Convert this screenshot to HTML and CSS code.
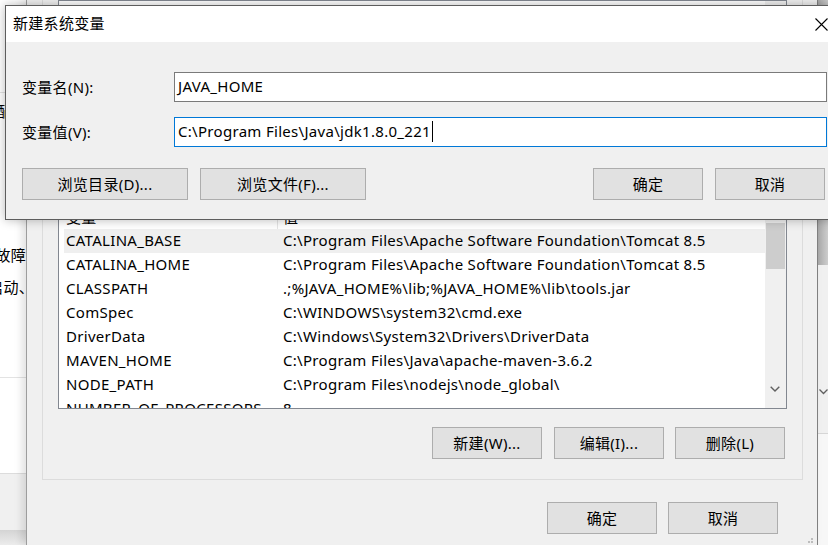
FILE: index.html
```html
<!DOCTYPE html>
<html lang="zh-CN">
<head>
<meta charset="utf-8">
<link rel="stylesheet" href="styles.css">
</head>
<body>
<div class="desk">
  <div class="bg-left">
    <div class="bl-line bl-l1"></div>
    <div class="bl-text bl-t1"><span>配置</span></div>
    <div class="bl-text bl-t2"><span>最</span></div>
    <div class="bl-text bl-t3"><span>排除故障</span></div>
    <div class="bl-text bl-t4"><span>系统启动、</span></div>
    <div class="bl-line bl-l2"></div>
    <div class="bl-foot"></div>
    <div class="bl-band"></div>
  </div>

  <div class="bg-right">
    <div class="br-thumb"></div>
    <div class="br-track">
      <svg class="br-chev" width="9" height="6" viewBox="0 0 9 6"><path d="M0.5 0.5 L4.5 4.5 L8.5 0.5" fill="none" stroke="#606060" stroke-width="1.3"/></svg>
    </div>
    <div class="br-low"></div>
  </div>

  <div class="envwin">
    <div class="grp">
      <div class="list">
        <div class="list-body">
          <div class="list-head"><span class="c1">变量</span><span class="c2">值</span></div>
          <div class="row sel"><span class="c1">CATALINA_BASE</span><span class="c2">C:\Program Files\Apache Software Foundation\Tomcat 8.5</span></div>
          <div class="row"><span class="c1">CATALINA_HOME</span><span class="c2">C:\Program Files\Apache Software Foundation\Tomcat 8.5</span></div>
          <div class="row"><span class="c1">CLASSPATH</span><span class="c2">.;%JAVA_HOME%\lib;%JAVA_HOME%\lib\tools.jar</span></div>
          <div class="row"><span class="c1">ComSpec</span><span class="c2">C:\WINDOWS\system32\cmd.exe</span></div>
          <div class="row"><span class="c1">DriverData</span><span class="c2">C:\Windows\System32\Drivers\DriverData</span></div>
          <div class="row"><span class="c1">MAVEN_HOME</span><span class="c2">C:\Program Files\Java\apache-maven-3.6.2</span></div>
          <div class="row"><span class="c1">NODE_PATH</span><span class="c2">C:\Program Files\nodejs\node_global\</span></div>
          <div class="row"><span class="c1">NUMBER_OF_PROCESSORS</span><span class="c2">8</span></div>
        </div>
        <div class="vscroll">
          <div class="thumb"></div>
          <svg class="chev" width="10" height="6" viewBox="0 0 10 6"><path d="M0.7 0.7 L5 5 L9.3 0.7" fill="none" stroke="#606060" stroke-width="1.4"/></svg>
        </div>
      </div>
      <div class="btnrow">
        <div class="btn w110 first">新建(W)...</div>
        <div class="btn w110">编辑(I)...</div>
        <div class="btn w110">删除(L)</div>
      </div>
    </div>
    <div class="okrow">
      <div class="btn w110">确定</div>
      <div class="btn w110">取消</div>
    </div>
    <div class="grip"><i></i><i></i><i></i></div>
  </div>

  <div class="dlg">
    <div class="titlebar">
      <span class="title">新建系统变量</span>
      <div class="closebtn">
        <svg width="13" height="13" viewBox="0 0 13 13"><path d="M0.5 0.5 L12.5 12.5 M12.5 0.5 L0.5 12.5" stroke="#000" stroke-width="1.1" fill="none"/></svg>
      </div>
    </div>
    <div class="dbody">
      <div class="frow">
        <span class="lbl">变量名(N):</span>
        <div class="field">JAVA_HOME</div>
      </div>
      <div class="frow r2">
        <span class="lbl">变量值(V):</span>
        <div class="field focus">C:\Program Files\Java\jdk1.8.0_221<span class="caret"></span></div>
      </div>
      <div class="dbtns">
        <div class="btn w166">浏览目录(D)...</div>
        <div class="btn w166 gap12">浏览文件(F)...</div>
        <div class="spacer"></div>
        <div class="btn w110">确定</div>
        <div class="btn w110 gap12">取消</div>
      </div>
    </div>
  </div>
</div>
</body>
</html>
```
FILE: styles.css
```css
* { box-sizing: border-box; }
html, body { margin: 0; padding: 0; }
body {
  width: 828px;
  height: 545px;
  overflow: hidden;
  background: #ffffff;
  font-family: "Noto Sans", "Noto Sans CJK SC", sans-serif;
  font-size: 15px;
  letter-spacing: 0.3px;
  color: #000;
}
.desk { position: relative; width: 828px; height: 545px; overflow: hidden; }

/* background window on the left */
.bg-left { position: absolute; left: 0; top: 0; width: 40px; height: 545px; background: #fff; }
.bl-line { position: absolute; left: 0; width: 40px; height: 1px; background: #e3e3e3; }
.bl-l1 { top: 92px; }
.bl-l2 { top: 377px; }
.bl-text { position: absolute; right: 13px; width: 60px; display: flex; justify-content: flex-end; white-space: nowrap; line-height: 20px; }
.bl-t1 { top: 101px; }
.bl-t2 { top: 132px; }
.bl-t3 { top: 245px; right: 14px; }
.bl-t4 { top: 277px; right: 6px; }
.bl-foot { position: absolute; left: 0; top: 473px; width: 40px; height: 57px; background: #f0f0f0; border-top: 1px solid #dcdcdc; }
.bl-band { position: absolute; left: 0; top: 530px; width: 40px; height: 15px; background: linear-gradient(#d4d4d4, #ececec); }

/* background window on the right */
.bg-right { position: absolute; left: 818px; top: 0; width: 10px; height: 545px; background: #f0f0f0; display: flex; flex-direction: column; }
.br-thumb { height: 265px; background: linear-gradient(90deg, #a9a9a9, #cdcdcd); }
.br-track { height: 168px; background: #f0f0f0; position: relative; }
.br-chev { position: absolute; left: 1px; top: 124px; }
.br-low { flex: 1; background: #f7f7f7; border-top: 1px solid #d6d6d6; }

/* environment variables window */
.envwin {
  position: absolute;
  left: 26px;
  top: 0;
  width: 792px;
  height: 545px;
  background: #f0f0f0;
  border-left: 1px solid #9d9d9d;
  border-right: 1px solid #808080;
  padding-left: 15px;
  box-shadow: -4px 0 8px rgba(0, 0, 0, 0.12);
}
.grp {
  width: 761px;
  height: 480px;
  border: 1px solid #dcdcdc;
  border-top: none;
  padding: 0 15px 0 15px;
}
.list {
  height: 409px;
  border: 1px solid #828790;
  background: #fff;
  display: flex;
}
.list-body { flex: 1; padding-top: 204px; overflow: hidden; }
.list-head, .row {
  display: grid;
  grid-template-columns: 213px 1fr;
  height: 24px;
  line-height: 22px;
  margin-left: 5px;
  white-space: nowrap;
}
.list-head { line-height: 25px; }
.list-head .c2 { border-left: 1px solid #e5e5e5; padding-left: 5px; }
.c1 { padding-left: 2px; overflow: hidden; }
.c2 { padding-left: 6px; overflow: hidden; }
.row.sel { background: #efefef; }
.vscroll { width: 21px; background: #f0f0f0; position: relative; padding-top: 222px; }
.thumb { width: 19px; height: 46px; background: #cdcdcd; margin-left: 1px; }
.chev { position: absolute; left: 5px; top: 385px; }

.btnrow { display: flex; justify-content: flex-end; gap: 11px; margin-top: 18px; padding-right: 2px; }
.btnrow .first { margin-right: 1px; }
.okrow { display: flex; justify-content: flex-end; gap: 11px; margin-top: 22px; padding-right: 39px; }

.btn {
  height: 32px;
  background: #e1e1e1;
  border: 1px solid #adadad;
  display: flex;
  align-items: center;
  justify-content: center;
  white-space: nowrap;
  padding-bottom: 2px;
}
.w110 { width: 110px; }
.w166 { width: 166px; }
.gap12 { margin-left: 12px; }

.grip { position: absolute; right: 4px; bottom: 2px; width: 6px; height: 6px; }
.grip i { position: absolute; width: 2px; height: 2px; background: #bdbdbd; }
.grip i:nth-child(1) { right: 0; bottom: 0; }
.grip i:nth-child(2) { right: 3px; bottom: 0; }
.grip i:nth-child(3) { right: 0; bottom: 3px; }

/* top dialog */
.dlg {
  position: absolute;
  left: 5px;
  top: 5px;
  width: 840px;
  height: 215px;
  background: #f0f0f0;
  border: 1px solid #5d5d5d;
  box-shadow: 0 0 10px rgba(0, 0, 0, 0.28);
  display: flex;
  flex-direction: column;
}
.titlebar { height: 36px; background: #fff; display: flex; align-items: center; }
.title { padding-left: 7px; flex: 1; line-height: 20px; padding-bottom: 2px; }
.closebtn { width: 46px; height: 36px; display: flex; align-items: center; justify-content: center; }
.dbody { padding: 30px 17px 19px 16px; }
.frow { display: flex; align-items: center; height: 30px; }
.frow.r2 { margin-top: 15px; }
.lbl { width: 152px; padding-bottom: 1px; }
.field {
  flex: 1;
  height: 30px;
  background: #fff;
  border: 1px solid #7a7a7a;
  padding-left: 3px;
  padding-bottom: 3px;
  display: flex;
  align-items: center;
  white-space: nowrap;
}
.field.focus { border-color: #0078d7; }
.caret { display: inline-block; width: 1px; height: 21px; background: #000; margin-left: 1px; margin-top: 2px; }
.dbtns { display: flex; margin-top: 21px; padding-right: 2px; }
.spacer { flex: 1; }
```
